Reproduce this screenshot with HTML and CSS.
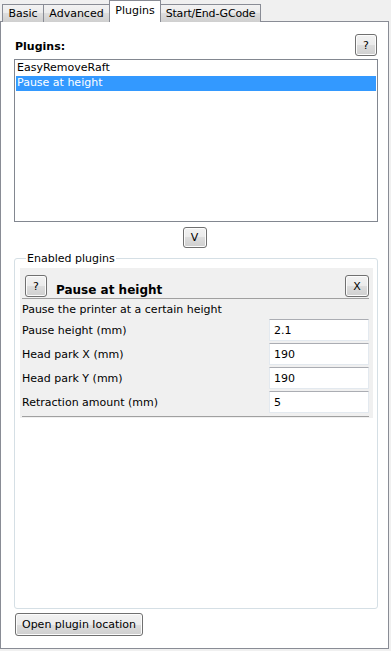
FILE: index.html
```html
<!DOCTYPE html>
<html lang="en">
<head>
  <meta charset="UTF-8" />
  <title>Plugins</title>
  <link rel="stylesheet" href="styles.css">
</head>
<body>
  <div class="tabs">
    <div class="tab tab-basic">Basic</div>
    <div class="tab tab-adv">Advanced</div>
    <div class="tab tab-plugins active">Plugins</div>
    <div class="tab tab-gcode">Start/End-GCode</div>
  </div>

  <div class="panel">
    <div class="head-row">
      <span class="head-label">Plugins:</span>
      <button class="btn btn-sq">?</button>
    </div>

    <div class="list">
      <div class="item">EasyRemoveRaft</div>
      <div class="item selected">Pause at height</div>
    </div>

    <div class="center-row">
      <button class="btn btn-v">V</button>
    </div>

    <fieldset class="group">
      <legend>Enabled plugins</legend>
      <div class="plugin">
        <div class="plugin-head">
          <button class="btn btn-sq">?</button>
          <span class="plugin-title">Pause at height</span>
          <button class="btn btn-x">X</button>
        </div>
        <div class="desc">Pause the printer at a certain height</div>
        <div class="field">
          <span>Pause height (mm)</span>
          <input type="text" value="2.1">
        </div>
        <div class="field">
          <span>Head park X (mm)</span>
          <input type="text" value="190">
        </div>
        <div class="field">
          <span>Head park Y (mm)</span>
          <input type="text" value="190">
        </div>
        <div class="field">
          <span>Retraction amount (mm)</span>
          <input type="text" value="5">
        </div>
      </div>
    </fieldset>

    <button class="btn btn-open">Open plugin location</button>
  </div>
</body>
</html>
```

FILE: styles.css
```css
body {
  margin: 0;
  background: #f0f0f0;
  font-family: 'DejaVu Sans', sans-serif;
  font-size: 11px;
  color: #000;
}

.tabs {
  display: flex;
  align-items: flex-end;
  height: 22px;
  padding-left: 2px;
  margin-bottom: -1px;
  position: relative;
}

.tab {
  height: 18px;
  line-height: 18px;
  text-align: center;
  white-space: nowrap;
  border: 1px solid #898c95;
  border-bottom: none;
  margin-right: -1px;
  background: linear-gradient(#f2f2f2, #ebebeb 50%, #dddddd 50%, #cfcfcf);
  box-sizing: border-box;
}

.tab-basic { width: 42px; }
.tab-adv { width: 67px; }
.tab-plugins { width: 52px; }
.tab-gcode { width: 101px; letter-spacing: -0.2px; }

.tab.active {
  height: 22px;
  line-height: 20px;
  background: #fff;
  position: relative;
  z-index: 1;
}

.panel {
  width: 389px;
  height: 628px;
  box-sizing: border-box;
  background: #fff;
  border: 1px solid #898c95;
  padding: 12px 10px 0 13px;
  display: flex;
  flex-direction: column;
}

.head-row {
  display: flex;
  justify-content: space-between;
  align-items: center;
  height: 22px;
  padding-left: 1px;
  margin-right: 1px;
}

.head-label {
  font-weight: bold;
  padding-top: 2px;
}

.btn {
  font-family: inherit;
  font-size: 11px;
  color: #000;
  border: 1px solid #707070;
  border-radius: 3px;
  background: linear-gradient(#f2f2f2, #ebebeb 50%, #dddddd 50%, #cfcfcf);
  box-shadow: inset 0 0 0 1px #fcfcfc;
  padding: 0;
  height: 22px;
}

.btn-sq { width: 22px; }
.btn-x { width: 24px; }
.btn-v { width: 24px; height: 21px; }

.list {
  margin-top: 3px;
  height: 163px;
  box-sizing: border-box;
  border: 1px solid #828790;
  padding: 1px;
}

.item {
  height: 15px;
  line-height: 14px;
  padding-left: 1px;
}

.item.selected {
  background: #3399ff;
  color: #fff;
}

.center-row {
  display: flex;
  justify-content: center;
  margin-top: 5px;
  margin-left: -3px;
}

.group {
  margin: 4px 0 0;
  padding: 3px 4px 0 5px;
  height: 357px;
  box-sizing: border-box;
  border: 1px solid #d5dfe5;
  border-radius: 3px;
}

.group legend {
  padding: 0 1px;
  margin-left: 6px;
}

.plugin {
  background: #f0f0f0;
  padding: 7px 0 1px;
}

.plugin-head {
  display: flex;
  align-items: flex-end;
  gap: 9px;
  padding: 0 0 1px 3px;
  border-bottom: 1px solid #a0a0a0;
  margin: 0 4px 0 2px;
}

.plugin-title {
  font-weight: bold;
  font-size: 12px;
  flex: 1;
  line-height: 14px;
}

.desc {
  padding: 4px 0 0 2px;
  height: 16px;
}

.field {
  display: flex;
  justify-content: space-between;
  align-items: center;
  padding-left: 2px;
  margin-right: 4px;
  margin-bottom: 2px;
}

.field input {
  width: 100px;
  height: 22px;
  box-sizing: border-box;
  border: 1px solid #e3e9ef;
  border-top-color: #abadb3;
  font-family: inherit;
  font-size: 11px;
  padding: 0 4px;
  margin: 0;
  outline: none;
}

.plugin .field:last-child {
  margin-bottom: 0;
  padding-bottom: 3px;
  border-bottom: 1px solid #a0a0a0;
  margin-left: 2px;
  padding-left: 0;
}

.btn-open {
  align-self: flex-start;
  margin: 4px 0 0 1px;
  width: 128px;
  height: 23px;
}
```
